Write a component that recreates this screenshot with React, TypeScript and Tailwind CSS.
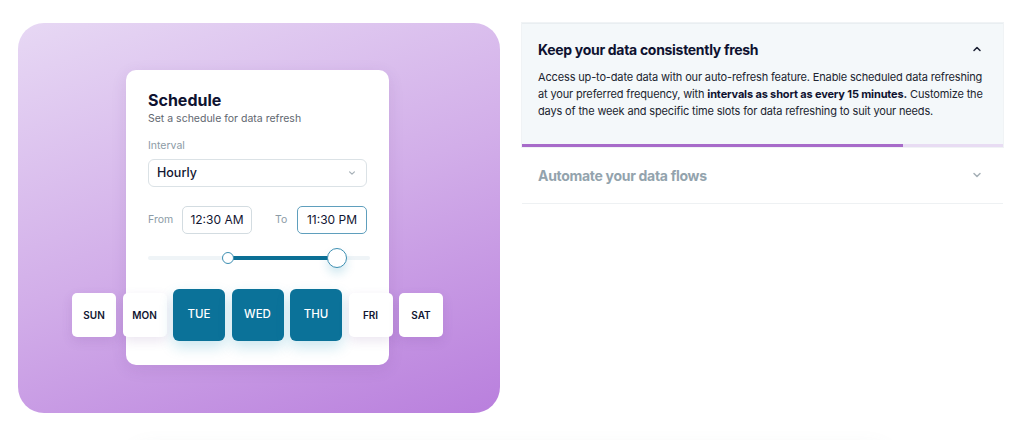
import React from "react";

const Chevron = ({ up = false, className = "" }: { up?: boolean; className?: string }) => (
  <svg width="10" height="10" viewBox="0 0 10 10" className={className} fill="none">
    <path
      d={up ? "M2 6.5 L5 3.5 L8 6.5" : "M2 3.5 L5 6.5 L8 3.5"}
      stroke="currentColor"
      strokeWidth="1.5"
      strokeLinecap="round"
      strokeLinejoin="round"
    />
  </svg>
);

const Day = ({ label, active = false }: { label: string; active?: boolean }) =>
  active ? (
    <div className="w-[52px] h-[52px] rounded-[6px] bg-[#0b7299] text-white text-[11.5px] font-medium flex items-center justify-center shadow-[0_6px_14px_rgba(14,140,180,0.22)]">
      {label}
    </div>
  ) : (
    <div className="w-[44px] h-[44px] rounded-[5px] bg-white text-[#121631] text-[10px] font-semibold flex items-center justify-center shadow-[0_4px_12px_rgba(90,40,130,0.12)]">
      {label}
    </div>
  );

export default function App() {
  return (
    <div
      className="w-[1024px] h-[440px] bg-white overflow-hidden relative"
      style={{ fontFamily: "Inter, 'Noto Sans', sans-serif" }}
    >
      <div className="flex gap-[22px] pl-[18px] pt-[23px]">
        {/* Left purple panel */}
        <div className="w-[482px] h-[390px] rounded-[26px] bg-[linear-gradient(160deg,#e7d8f4_0%,#d2aee9_50%,#b97fdd_100%)] pl-[108px] pt-[47px]">
          <div className="w-[263px] h-[295px] bg-white rounded-[10px] shadow-[0_4px_16px_rgba(80,30,120,0.10)] px-[22px] pt-[20px] flex flex-col">
            <div className="text-[16px] leading-[20px] font-bold text-[#0e1230]">Schedule</div>
            <div className="mt-[2px] text-[10.5px] leading-[14px] text-[#5f6770]">Set a schedule for data refresh</div>
            <div className="mt-[13px] text-[10.5px] leading-[14px] text-[#8c9ba6]">Interval</div>
            <div className="mt-[6px] h-[28px] rounded-[6px] border border-[#dbe2e6] flex items-center justify-between pl-[8px] pr-[10px]">
              <span className="text-[12.5px] text-[#121631] font-medium">Hourly</span>
              <Chevron className="text-[#a6b0b7] w-[8px] h-[8px]" />
            </div>
            <div className="mt-[19px] flex items-center">
              <span className="text-[10.5px] text-[#8c9ba6] w-[34px]">From</span>
              <div className="w-[70px] h-[28px] rounded-[5px] border border-[#d3dce1] flex items-center justify-center text-[12px] text-[#121631]">
                12:30 AM
              </div>
              <span className="ml-[23px] text-[10.5px] text-[#8c9ba6] w-[22px]">To</span>
              <div className="w-[70px] h-[28px] rounded-[5px] border border-[#5f9fbd] flex items-center justify-center text-[12px] text-[#121631]">
                11:30 PM
              </div>
            </div>
            <div className="mt-[14px] h-[20px] relative">
              <div className="absolute left-0 right-[-3px] top-[8px] h-[4px] rounded-full bg-[#eff4f7]" />
              <div className="absolute left-[80px] w-[109px] top-[8px] h-[4px] bg-[#0b6f95]" />
              <div className="absolute left-[74px] top-[4px] w-[12px] h-[12px] rounded-full bg-white border border-[#3d8fb2]" />
              <div className="absolute left-[179px] top-0 w-[20px] h-[20px] rounded-full bg-white border border-[#3d8fb2] shadow-[0_6px_10px_rgba(14,140,180,0.18)]" />
            </div>
            <div className="mt-[21px] -mx-[76px] flex items-center justify-center gap-[6.5px]">
              <Day label="SUN" />
              <Day label="MON" />
              <Day label="TUE" active />
              <Day label="WED" active />
              <Day label="THU" active />
              <Day label="FRI" />
              <Day label="SAT" />
            </div>
          </div>
        </div>

        {/* Right accordion */}
        <div className="w-[481px] flex flex-col">
          <div className="bg-[#f4f8fa] border-t border-[#e9eef1] shadow-[0_0_0_1px_rgba(225,232,236,0.5)]">
            <div className="px-[16px] pt-[15px] pb-[24px]">
              <div className="flex items-center justify-between h-[20px]">
                <span className="text-[14px] font-bold tracking-[-0.3px] text-[#0e1230]">Keep your data consistently fresh</span>
                <Chevron up className="text-[#1b1f33] mr-[5px]" />
              </div>
              <p className="mt-[10px] text-[11px] leading-[17px] tracking-[-0.15px] text-[#20242f] whitespace-nowrap">
                Access up-to-date data with our auto-refresh feature. Enable scheduled data refreshing
                <br />
                at your preferred frequency, with <b className="font-bold text-[#0e1230]">intervals as short as every 15 minutes.</b>{" "}
                Customize the
                <br />
                days of the week and specific time slots for data refreshing to suit your needs.
              </p>
            </div>
            <div className="h-[3px] bg-[#e8dcf3] flex">
              <div className="w-[381px] h-full bg-[#a76bc9]" />
            </div>
          </div>
          <div className="h-[57px] border-b border-[#eef1f3] px-[16px] flex items-center justify-between">
            <span className="text-[14px] font-bold tracking-[-0.3px] text-[#93a3ad]">Automate your data flows</span>
            <Chevron className="text-[#a6b0b7] mr-[5px]" />
          </div>
        </div>
      </div>

      {/* faint shadow of content below */}
      <div className="absolute left-[130px] w-[760px] top-[452px] h-[40px] rounded-[20px] bg-white shadow-[0_-4px_20px_rgba(120,140,150,0.10)]" />
    </div>
  );
}
